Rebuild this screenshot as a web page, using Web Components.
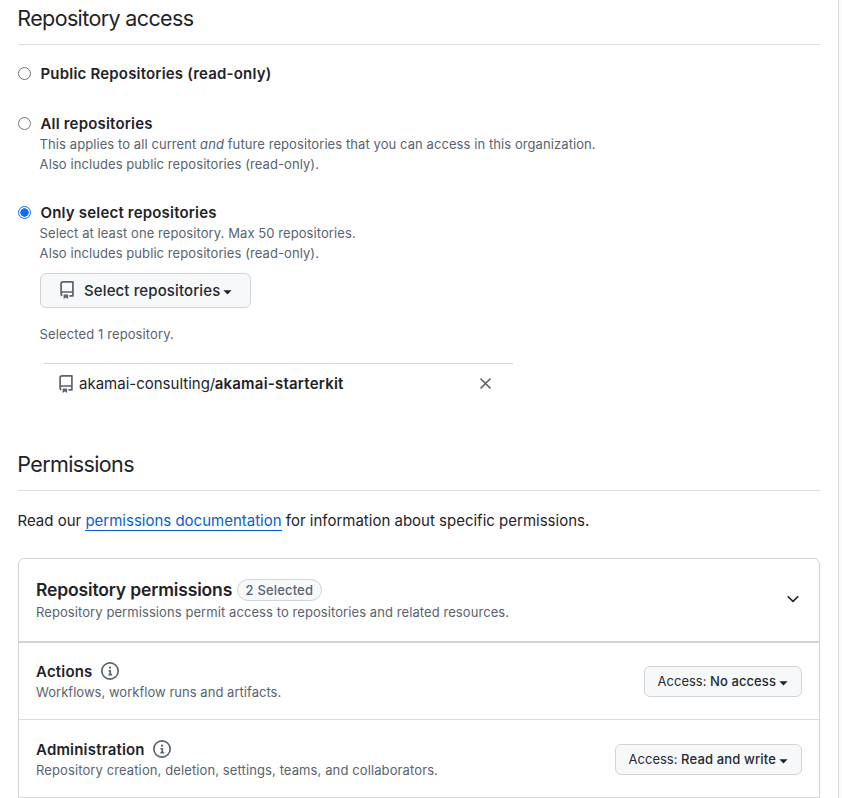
<!DOCTYPE html>
<html lang="en">
<head>
<meta charset="utf-8">
<title>Repository access</title>
<style>
html,body{margin:0;background:#fff}
body{height:798px;overflow:hidden;font-family:Inter,"Liberation Sans",sans-serif;color:#1f2328}
</style>
</head>
<body>
<token-page></token-page>
<script>
const define = (name, html) => {
  const t = document.createElement('template');
  t.innerHTML = html;
  customElements.define(name, class extends HTMLElement {
    constructor() {
      super();
      this.attachShadow({mode: 'open'}).append(t.content.cloneNode(true));
    }
  });
};

define('repo-icon', `<style>:host{display:block;width:18px;height:18px;color:#59636e}svg{display:block;width:100%;height:100%}</style>
<svg viewBox="0 0 16 16" fill="currentColor"><path d="M2 2.5A2.5 2.5 0 0 1 4.5 0h8.75a.75.75 0 0 1 .75.75v12.5a.75.75 0 0 1-.75.75h-2.5a.75.75 0 0 1 0-1.5h1.75v-2h-8a1 1 0 0 0-.714 1.7.75.75 0 1 1-1.072 1.05A2.495 2.495 0 0 1 2 11.5Zm10.5-1h-8a1 1 0 0 0-1 1v6.708A2.486 2.486 0 0 1 4.5 9h8ZM5 12.25a.25.25 0 0 1 .25-.25h3.5a.25.25 0 0 1 .25.25v3.25a.25.25 0 0 1-.4.2l-1.45-1.087a.249.249 0 0 0-.3 0L5.4 15.7a.25.25 0 0 1-.4-.2Z"/></svg>`);

define('info-icon', `<style>:host{display:block;width:18px;height:18px;color:#59636e}svg{display:block;width:100%;height:100%}</style>
<svg viewBox="0 0 16 16" fill="currentColor"><path d="M0 8a8 8 0 1 1 16 0A8 8 0 0 1 0 8Zm8-6.5a6.5 6.5 0 1 0 0 13 6.5 6.5 0 0 0 0-13ZM6.5 7.75A.75.75 0 0 1 7.25 7h1a.75.75 0 0 1 .75.75v2.75h.25a.75.75 0 0 1 0 1.5h-2a.75.75 0 0 1 0-1.5h.25v-2h-.25a.75.75 0 0 1-.75-.75ZM8 6a1 1 0 1 1 0-2 1 1 0 0 1 0 2Z"/></svg>`);

define('section-title', `<style>:host{display:block;box-sizing:border-box;border-bottom:1px solid #dcdfe2;font-size:21.5px;line-height:30px;letter-spacing:-.63px;padding-bottom:11px}span{margin-left:-.7px}</style><span><slot></slot></span>`);

define('sub-text', `<style>:host{display:block;font-size:13px;line-height:20px;letter-spacing:var(--sub-spacing,.08px);color:#59636e}</style><slot></slot>`);

define('radio-option', `<style>
:host{display:grid;grid-template-columns:22px 1fr;align-items:center}
i{width:11px;height:11px;border:1px solid #767676;border-radius:50%}
:host([checked]) i{border-color:#0d6efd;background:radial-gradient(circle,#0d6efd 0 3.9px,#fff 4.5px)}
b{font-weight:600;font-size:15px;line-height:21px;letter-spacing:.19px;padding-left:.5px}
div{grid-column:2;--sub-spacing:.08px}</style><i></i><b><slot name="label"></slot></b><div><slot></slot></div>`);

define('menu-button', `<style>
:host{display:flex;box-sizing:border-box;align-items:center;width:max-content;border:1px solid #d1d5da;border-radius:6px;background:#f6f8fa;color:#25292e;height:31px;font-size:13px;line-height:20px;padding:0 13px;letter-spacing:0}
svg{margin:4px 0 0 3px;display:block}
</style><slot></slot><svg width="9" height="5" viewBox="0 0 9 5"><path d="M.4.3h8.2L4.5 4.6Z" fill="#1f2328"/></svg>`);

define('count-badge', `<style>:host{display:block;box-sizing:border-box;height:22px;border:1px solid #d1d5da;border-radius:11px;background:#f6f8fa;color:#59636e;font-size:13px;font-weight:500;line-height:20px;padding:0 7.5px;letter-spacing:.16px}</style><slot></slot>`);

define('permission-row', `<style>
:host{display:flex;box-sizing:border-box;height:78px;border-bottom:1px solid #d8dcdf;align-items:center;justify-content:space-between;padding:1px 17px 0}
h3{margin:0;display:flex;align-items:center;gap:8.5px;font-size:15px;font-weight:600;line-height:21px;letter-spacing:.19px}
</style><div><h3><slot name="title"></slot><info-icon></info-icon></h3><sub-text><slot></slot></sub-text></div>
<menu-button><slot name="access"></slot></menu-button>`);

define('permission-box', `<style>
:host{display:block;box-sizing:border-box;height:260px;border:1px solid #d1d5da;border-radius:6px 6px 0 0;margin-top:27px}
header{display:flex;box-sizing:border-box;height:84px;margin-bottom:-1px;border-bottom:2px solid #d1d5da;align-items:center;justify-content:space-between;padding:0 19px 0 17px}
h2{margin:0;display:flex;align-items:center;gap:5px;font-size:17.5px;font-weight:600;line-height:22px;letter-spacing:-.15px;padding-bottom:1px}
header>svg{margin-top:-2px}
</style><header><div><h2>Repository permissions<count-badge>2 Selected</count-badge></h2><sub-text>Repository permissions permit access to repositories and related resources.</sub-text></div>
<svg width="14" height="14" viewBox="0 0 14 14" fill="none" stroke="#1f2328" stroke-width="1.6" stroke-linecap="round" stroke-linejoin="round"><path d="M2.2 4.7 7 9.4l4.8-4.7"/></svg></header><slot></slot>`);

define('selected-repo', `<style>
:host{display:flex;box-sizing:border-box;width:469px;height:41px;margin:19px 0 0 4px;border-top:1px solid #d1d5da;align-items:center;font-size:15px;padding:0 21px 1px 13px}
repo-icon{margin-right:4px}b{font-weight:600;letter-spacing:.22px;margin-left:-.6px}svg{margin-left:auto}
</style><repo-icon></repo-icon><slot></slot><b><slot name="name"></slot></b>
<svg width="13" height="13" viewBox="0 0 13 13" stroke="#59636e" stroke-width="1.7" stroke-linecap="round"><path d="M2 2l9 9M11 2l-9 9"/></svg>`);

define('token-page', `<style>
:host{display:grid;grid-template-columns:820px 18px 1fr;height:798px;overflow:hidden}
main{padding:3px 0 0 18px}
aside{grid-column:3;border-left:1px solid #dfe0e2;background:#fafafa}
.a{margin-top:18px}.b{margin-top:29px}.c{margin-top:28px}
.note{margin-left:-.4px}
.big{height:35px;margin-top:10px;font-size:15px;padding:0 17.5px 0 17px;letter-spacing:.12px;font-weight:500}
.big repo-icon{margin-right:8px;margin-top:-2px}
.sel{margin-top:16px;letter-spacing:.11px}
.perm{margin-top:45px}
p{margin:20px 0 0 -.5px;font-size:15px;line-height:20px}
a{color:#0860ca;text-decoration:none;box-shadow:0 1px 0 #0860ca}
strong{font-weight:500;letter-spacing:.08px}
.wide{letter-spacing:.15px}
</style>
<main>
<section-title>Repository access</section-title>
<radio-option class="a"><span slot="label">Public Repositories (read-only)</span></radio-option>
<radio-option class="b"><span slot="label">All repositories</span>
<sub-text class="note">This applies to all current <em>and</em> future repositories that you can access in this organization.<br>Also includes public repositories (read-only).</sub-text></radio-option>
<radio-option class="c" checked><span slot="label">Only select repositories</span>
<sub-text class="note">Select at least one repository. Max 50 repositories.<br>Also includes public repositories (read-only).</sub-text>
<menu-button class="big"><repo-icon></repo-icon>Select repositories</menu-button>
<sub-text class="sel note">Selected 1 repository.</sub-text>
<selected-repo>akamai-consulting/<span slot="name">akamai-starterkit</span></selected-repo>
</radio-option>
<section-title class="perm">Permissions</section-title>
<p>Read our <a>permissions documentation</a> for information about specific permissions.</p>
<permission-box>
<permission-row style="--sub-spacing:.03px"><span slot="title">Actions</span>Workflows, workflow runs and artifacts.<span slot="access">Access: <strong>No access</strong></span></permission-row>
<permission-row style="--sub-spacing:.11px"><span slot="title">Administration</span>Repository creation, deletion, settings, teams, and collaborators.<span slot="access">Access: <strong class="wide">Read and write</strong></span></permission-row>
</permission-box>
</main><aside></aside>`);
</script>
</body>
</html>
